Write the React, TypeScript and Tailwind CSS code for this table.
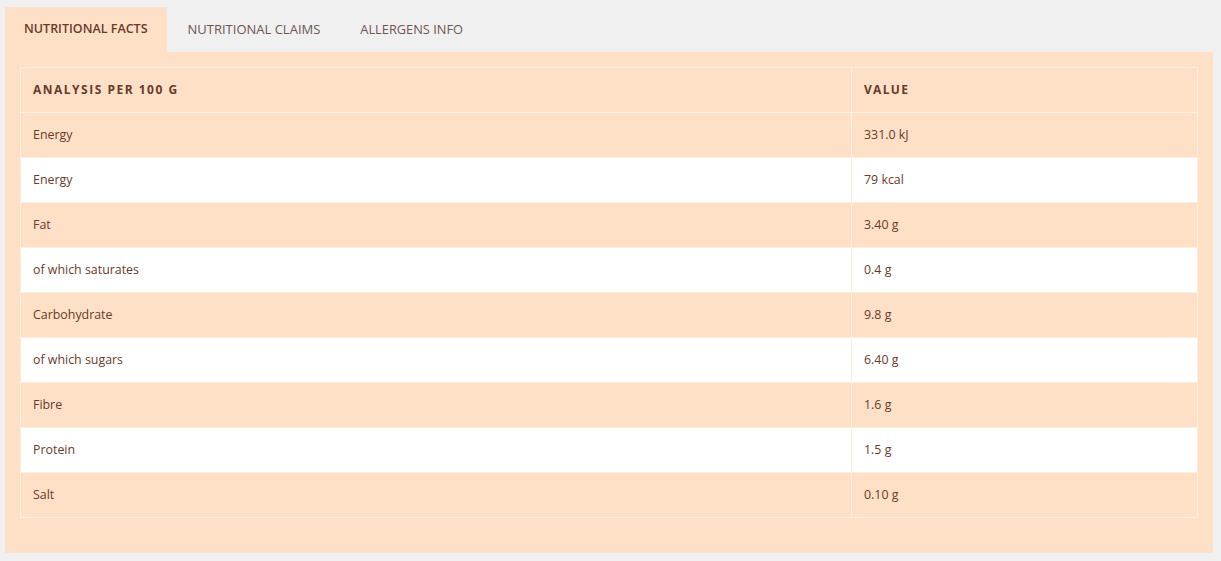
import React from "react";

const rows: [string, string][] = [
  ["Energy", "331.0 kJ"],
  ["Energy", "79 kcal"],
  ["Fat", "3.40 g"],
  ["of which saturates", "0.4 g"],
  ["Carbohydrate", "9.8 g"],
  ["of which sugars", "6.40 g"],
  ["Fibre", "1.6 g"],
  ["Protein", "1.5 g"],
  ["Salt", "0.10 g"],
];

export default function App() {
  return (
    <div
      className="w-[1221px] h-[561px] bg-[#f0f0f0] pt-[7px] pl-[5px] pr-[8px]"
      style={{ fontFamily: '"Open Sans", sans-serif' }}
    >
      <div className="flex text-[13px] leading-[44px] h-[45px]">
        <div className="bg-[#fee0c7] px-[19px] text-[12.5px] text-[#6b3b2a] font-semibold">NUTRITIONAL FACTS</div>
        <div className="pl-[21px] pr-[20px] text-[#6e5550]">NUTRITIONAL CLAIMS</div>
        <div className="px-[20px] text-[12.8px] text-[#6e5550]">ALLERGENS INFO</div>
      </div>
      <div className="bg-[#fee0c7] pt-[15px] px-[15px] pb-[35px]">
        <table className="w-full border-collapse text-[12.4px] text-[#6b3b2a]">
          <thead>
            <tr className="h-[45px]">
              <th className="w-[831px] border border-[#fdeee2] text-left px-[12px] text-[12px] font-bold tracking-[1.5px] text-[#6b3b2a]">
                ANALYSIS PER 100 G
              </th>
              <th className="border border-[#fdeee2] text-left px-[12px] text-[12px] font-bold tracking-[1.3px] text-[#6b3b2a]">
                VALUE
              </th>
            </tr>
          </thead>
          <tbody>
            {rows.map(([k, v], i) => (
              <tr key={i} className={"h-[45px] " + (i % 2 === 0 ? "bg-[#fee0c7]" : "bg-white")}>
                <td className="border border-[#fdeee2] px-[12px] text-[#6b3b2a]">{k}</td>
                <td className="border border-[#fdeee2] px-[12px] text-[#6b3b2a]">{v}</td>
              </tr>
            ))}
          </tbody>
        </table>
      </div>
    </div>
  );
}
